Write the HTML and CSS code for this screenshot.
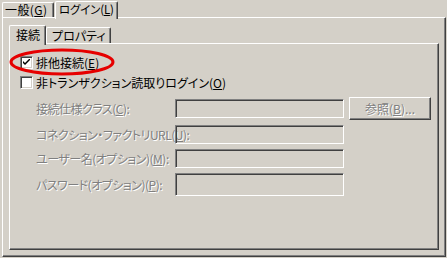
FILE: index.html
```html
<!DOCTYPE html>
<html lang="ja">
<head>
    <meta charset="UTF-8">
    <title>ログイン設定</title>
    <link rel="stylesheet" href="styles.css">
</head>
<body>
    <div class="dialog">
        <div class="tabs outer-tabs">
            <div class="tab general">一般(<u>G</u>)</div>
            <div class="tab login active">ログイン(<u>L</u>)</div>
        </div>
        <div class="panel">
            <div class="tabs inner-tabs">
                <div class="tab active">接続</div>
                <div class="tab">プロパティ</div>
            </div>
            <div class="panel inner-panel">
                <label class="check-row">
                    <span class="checkbox checked">
                        <svg width="7" height="7" viewBox="0 0 7 7"><path d="M0 2 L0 4 L2 6 L7 1 L7 -1 L2 4 Z" fill="#000"/></svg>
                    </span>
                    <span>排他接続(<u>E</u>)</span>
                </label>
                <label class="check-row">
                    <span class="checkbox"></span>
                    <span>非トランザクション読取りログイン(<u>O</u>)</span>
                </label>

                <div class="form">
                    <span class="field-label">接続仕様クラス(<u>C</u>):</span>
                    <span class="textbox"></span>
                    <span class="button">参照(<u>B</u>)...</span>

                    <span class="field-label">コネクション・ファクトリURL(<u>U</u>):</span>
                    <span class="textbox"></span>
                    <span></span>

                    <span class="field-label">ユーザー名(オプション)(<u>M</u>):</span>
                    <span class="textbox"></span>
                    <span></span>

                    <span class="field-label">パスワード(オプション)(<u>P</u>):</span>
                    <span class="textbox tall"></span>
                    <span></span>
                </div>

                <svg class="highlight" width="106" height="28" viewBox="0 0 106 28">
                    <ellipse cx="53" cy="14" rx="51" ry="12" fill="none" stroke="#e60000" stroke-width="3"/>
                </svg>
            </div>
        </div>
    </div>
</body>
</html>
```

FILE: styles.css
```css
body {
    margin: 0;
    background: #d4d0c8;
    font-family: "Noto Sans CJK JP", "MS UI Gothic", sans-serif;
    font-size: 12px;
    font-feature-settings: "palt";
    color: #000;
}
u {
    text-decoration: underline;
    text-underline-offset: 1px;
}
.dialog {
    display: flex;
    flex-direction: column;
    height: 258px;
    box-sizing: border-box;
    padding: 1px 1px 1px 2px;
}
.tabs {
    display: flex;
    align-items: flex-end;
    height: 16px;
    position: relative;
    z-index: 1;
}
.tab {
    height: 14px;
    line-height: 14px;
    padding: 0 4px 0 5px;
    border-top: 1px solid #fff;
    border-left: 1px solid #fff;
    border-right: 1px solid #404040;
    border-radius: 2px 2px 0 0;
    box-shadow: inset -1px 0 #808080;
    background: #d4d0c8;
    white-space: nowrap;
}
.tab.active {
    height: 17px;
    margin-bottom: -2px;
}
.outer-tabs .tab {
    box-sizing: border-box;
    height: 15px;
}
.outer-tabs .tab.active {
    height: 18px;
}
.outer-tabs .general {
    width: 52px;
    padding: 0 0 0 2px;
    letter-spacing: 0.4px;
}
.outer-tabs .login {
    margin-left: 1px;
    padding: 0 3px 0 3px;
    font-size: 11.5px;
    letter-spacing: -0.2px;
}
.panel {
    flex: 1;
    display: flex;
    flex-direction: column;
    border: 1px solid;
    border-color: #fff #404040 #404040 #fff;
    box-shadow: inset -1px -1px #808080;
    padding: 7px 6px 6px 6px;
}
.inner-tabs {
    height: 18px;
}
.inner-tabs .tab {
    height: 15px;
    line-height: 15px;
}
.inner-tabs .tab.active {
    height: 19px;
    line-height: 18px;
    padding: 0 5px 0 6px;
}
.inner-panel {
    position: relative;
    padding: 8px 0 0 10px;
}
.check-row {
    display: flex;
    align-items: center;
    gap: 3px;
    height: 20px;
}
.checkbox {
    width: 9px;
    height: 9px;
    display: flex;
    align-items: center;
    justify-content: center;
    background: #fff;
    border: 1px solid;
    border-color: #808080 #fff #fff #808080;
    box-shadow: inset 1px 1px #404040, inset -1px -1px #d4d0c8;
    padding: 1px;
}
.form {
    display: grid;
    grid-template-columns: 134px 169px 82px;
    grid-template-rows: 23px 19px 19px 23px;
    column-gap: 5px;
    row-gap: 5px;
    margin-top: 5px;
    padding-left: 16px;
    align-items: center;
}
.field-label {
    color: #808080;
    text-shadow: 1px 1px #fff;
    white-space: nowrap;
    letter-spacing: -0.5px;
}
.textbox {
    height: 19px;
    box-sizing: border-box;
    border: 1px solid;
    border-color: #808080 #fff #fff #808080;
    box-shadow: inset 1px 1px #404040, inset -1px -1px #d4d0c8;
}
.textbox.tall {
    height: 23px;
}
.button {
    height: 23px;
    box-sizing: border-box;
    display: flex;
    align-items: center;
    justify-content: center;
    border: 1px solid;
    border-color: #fff #404040 #404040 #fff;
    box-shadow: inset -1px -1px #808080;
    color: #808080;
    text-shadow: 1px 1px #fff;
}
.highlight {
    position: absolute;
    left: -1px;
    top: 4px;
}
```
